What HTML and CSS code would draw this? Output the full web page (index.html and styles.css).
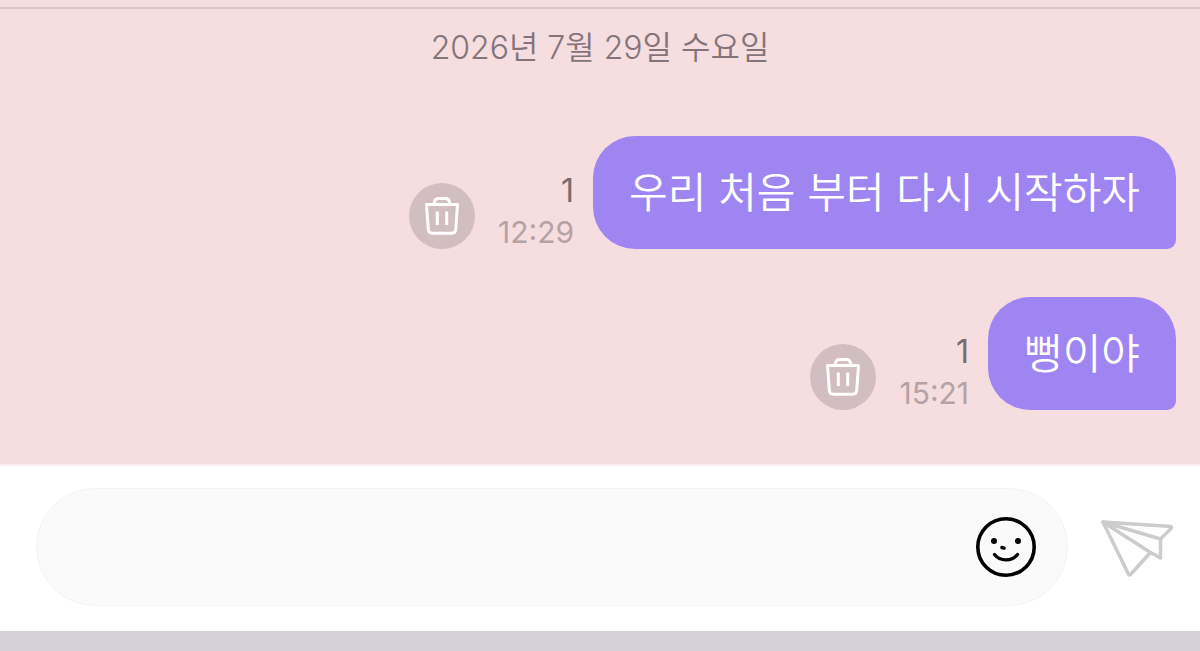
FILE: index.html
```html
<!DOCTYPE html>
<html lang="ko">
<head>
<meta charset="utf-8">
<meta name="viewport" content="width=device-width, initial-scale=1">
<title>채팅</title>
<link rel="stylesheet" href="styles.css">
</head>
<body>
<svg class="symbols" aria-hidden="true">
  <symbol id="trash" viewBox="0 0 66 66">
    <g fill="none" stroke="#fff" stroke-width="3" stroke-linecap="round" stroke-linejoin="round">
      <path d="M17.500 21.500H48.500L46.700 46.500Q46.400 50.300 42.600 50.300H23.400Q19.600 50.300 19.300 46.500Z"/>
      <path d="M25 21L25.600 18.500Q26.500 15.500 29.200 15.500H36.800Q39.500 15.500 40.400 18.500L41 21"/>
      <path d="M28.300 28.500V42M37.700 28.500V42" stroke-linecap="butt"/>
    </g>
  </symbol>
</svg>
<div class="app">
  <main class="chat">
    <time class="date" datetime="2026-07-29">2026년 7월 29일 수요일</time>
    <div class="messages">
      <article class="message">
        <button class="delete" type="button" aria-label="삭제"><svg viewBox="0 0 66 66"><use href="#trash"/></svg></button>
        <div class="meta"><span class="unread">1</span><time class="clock">12:29</time></div>
        <p class="bubble">우리 처음 부터 다시 시작하자</p>
      </article>
      <article class="message">
        <button class="delete" type="button" aria-label="삭제"><svg viewBox="0 0 66 66"><use href="#trash"/></svg></button>
        <div class="meta"><span class="unread">1</span><time class="clock">15:21</time></div>
        <p class="bubble">뻥이야</p>
      </article>
    </div>
  </main>
  <form class="composer">
    <div class="field">
      <input class="entry" type="text" aria-label="메시지 입력">
      <button class="emoji" type="button" aria-label="이모티콘">
        <svg viewBox="0 0 60 60" fill="none" stroke="#000" stroke-width="3.600" stroke-linecap="round">
          <circle cx="30" cy="30" r="28.200"/>
          <circle cx="18" cy="24" r="3" fill="#000" stroke="none"/>
          <circle cx="42" cy="24" r="3" fill="#000" stroke="none"/>
          <path d="M26 30.500L28 31.100"/>
          <path d="M18.500 37.500C24 44.600 36 44.600 41.500 37.500" stroke-width="3.300"/>
        </svg>
      </button>
    </div>
    <button class="send" type="submit" aria-label="보내기">
      <svg viewBox="0 0 72 60" fill="none" stroke="#ccc" stroke-width="3.500" stroke-linecap="round" stroke-linejoin="round">
        <path d="M3 5L71 9.500Q72 10 71 11.500L60.500 22V41L50.500 35.500L30.500 57.500Q29.500 58.500 28.500 57.200Z"/>
        <path d="M3 5L60.500 22M3 5L50.500 35.500"/>
      </svg>
    </button>
  </form>
  <footer class="keyboard-edge"></footer>
</div>
</body>
</html>
```
FILE: styles.css
```css
* {
  box-sizing: border-box;
}

body {
  margin: 0;
  font-family: Inter, "Noto Sans CJK KR", sans-serif;
}

.symbols {
  display: none;
}

.app {
  display: flex;
  flex-direction: column;
  min-height: 100vh;
  background: #f5dde0;
}

.app::before {
  content: "";
  height: 7px;
  border-bottom: 2px solid #dfc5ca;
}

.chat {
  flex: 1;
  display: flex;
  flex-direction: column;
  gap: 64px;
  padding: 15px 24px 54px;
}

.date {
  text-align: center;
  font-size: 32px;
  line-height: 48px;
  font-weight: 350;
  color: #84747a;
}

.messages {
  display: flex;
  flex-direction: column;
  gap: 48px;
}

.message {
  display: flex;
  justify-content: flex-end;
  align-items: flex-end;
  gap: 19px;
}

button {
  flex: none;
  padding: 0;
  border: 0;
  background: none;
  cursor: pointer;
}

button svg {
  display: block;
  width: 100%;
  overflow: visible;
}

.delete {
  width: 66px;
  height: 66px;
  margin-right: 4px;
  border-radius: 50%;
  background: #d2bdc0;
}

.meta {
  display: flex;
  flex-direction: column;
  align-items: flex-end;
}

.unread {
  font-size: 32px;
  line-height: 48px;
  color: #796b6e;
}

.clock {
  font-size: 30px;
  line-height: 34px;
  color: #b5a2a6;
}

.bubble {
  margin: 0;
  padding: 24px 36px;
  border-radius: 42px 42px 9px 42px;
  background: #9f85f2;
  color: #fff;
  font-size: 42px;
  line-height: 65px;
  font-weight: 350;
}

.composer {
  display: flex;
  align-items: center;
  gap: 32px;
  padding: 22px 28px 25px 36px;
  border-top: 2px solid #fbeef0;
  background: #fff;
}

.field {
  flex: 1;
  display: flex;
  align-items: center;
  height: 118px;
  padding: 0 31px 0 40px;
  border: 1px solid #f3f3f3;
  border-radius: 59px;
  background: #fafafa;
}

.entry {
  flex: 1;
  min-width: 0;
  height: 64px;
  border: 0;
  outline: 0;
  background: transparent;
  font: inherit;
  font-size: 42px;
}

.emoji {
  width: 60px;
}

.send {
  width: 72px;
}

.keyboard-edge {
  height: 20px;
  background: #d3d0d7;
}
```
